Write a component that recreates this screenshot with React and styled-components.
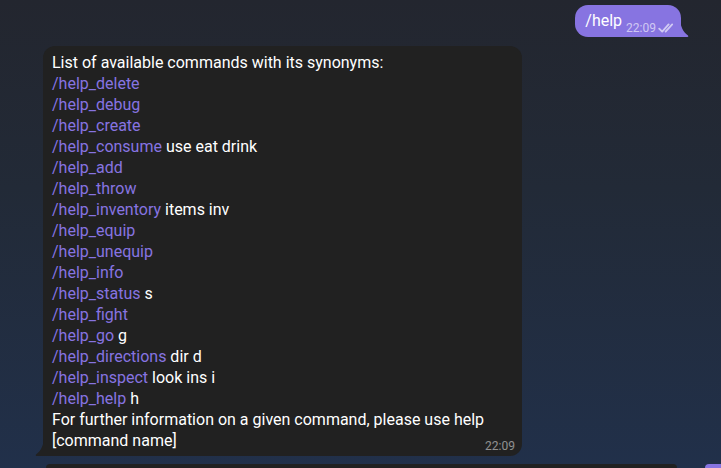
import React from "react";
import styled, { createGlobalStyle } from "styled-components";

const Global = createGlobalStyle`
  html, body {
    margin: 0;
    height: 468px;
    overflow: hidden;
  }
  body {
    background: linear-gradient(180deg, #23262f 0%, #222a37 40%, #21304a 100%);
    font-family: Roboto, "Liberation Sans", sans-serif;
    -webkit-font-smoothing: antialiased;
  }
`;

const Page = styled.div`
  display: flex;
  flex-direction: column;
  padding-top: 5px;
`;

const Row = styled.div`
  display: flex;
  justify-content: ${p => (p.$out ? "flex-end" : "flex-start")};
  padding: ${p => (p.$out ? "0 40px 0 0" : "0 0 0 43px")};
  margin-top: ${p => p.$gap || 0}px;
`;

const OutBubble = styled.div`
  position: relative;
  display: flex;
  align-items: flex-end;
  gap: 4px;
  background: #8774e1;
  color: #fff;
  border-radius: 13px 13px 0 13px;
  padding: 5px 6px 6px 10px;
  font-size: 16px;
  line-height: 21px;
`;

const InBubble = styled.div`
  position: relative;
  width: 479px;
  box-sizing: border-box;
  background: #212121;
  color: #fff;
  border-radius: 12px 12px 12px 0;
  padding: 6px 9px 5px 9px;
  font-size: 16px;
  line-height: 21px;
`;

const Tail = styled.svg`
  position: absolute;
  bottom: 0;
  width: 9px;
  height: 17px;
  ${p => (p.$out ? "right: -8px;" : "left: -8px;")}
`;

const Line = styled.div``;

const Cmd = styled.span`
  color: #8774e1;
`;

const OutMeta = styled.span`
  display: inline-flex;
  align-items: center;
  gap: 2px;
  font-size: 12px;
  line-height: 14px;
  color: rgba(255, 255, 255, 0.62);
  margin-bottom: -4px;
`;

const InMeta = styled.span`
  position: absolute;
  right: 7px;
  bottom: 3px;
  font-size: 12px;
  line-height: 14px;
  color: rgba(255, 255, 255, 0.5);
`;

const BottomRow = styled.div`
  display: flex;
  margin-top: 8px;
  padding-left: 46px;
  gap: 28px;
`;

const Stub = styled.div`
  height: 4px;
  width: ${p => p.$w}px;
  flex-shrink: 0;
  background: ${p => (p.$out ? "#8774e1" : "#212121")};
  border-radius: 4px 4px 0 0;
`;

const commands = [
  ["delete"],
  ["debug"],
  ["create"],
  ["consume", "use eat drink"],
  ["add"],
  ["throw"],
  ["inventory", "items inv"],
  ["equip"],
  ["unequip"],
  ["info"],
  ["status", "s"],
  ["fight"],
  ["go", "g"],
  ["directions", "dir d"],
  ["inspect", "look ins i"],
  ["help", "h"],
];

const Checks = () => (
  <svg width="17" height="10" viewBox="0 0 17 10" fill="none" stroke="currentColor" strokeWidth="1.8" strokeLinecap="round" strokeLinejoin="round">
    <path d="M1.2 5.6 L4.2 8.6 L10.6 1.4" />
    <path d="M7.6 8.6 L14.2 1.4" />
  </svg>
);

export default function App() {
  return (
    <>
      <Global />
      <Page>
        <Row $out>
          <OutBubble>
            <span>/help</span>
            <OutMeta>
              22:09
              <Checks />
            </OutMeta>
            <Tail $out viewBox="0 0 9 17">
              <path d="M0 0 C0.5 6 3 12 8 15.5 Q9 16.5 7.5 17 H0 Z" fill="#8774e1" />
            </Tail>
          </OutBubble>
        </Row>
        <Row $gap={9}>
          <InBubble>
            <Line>List of available commands with its synonyms:</Line>
            {commands.map(([name, syn]) => (
              <Line key={name}>
                <Cmd>/help_{name}</Cmd>
                {syn ? " " + syn : null}
              </Line>
            ))}
            <Line>For further information on a given command, please use help [command name]</Line>
            <InMeta>22:09</InMeta>
            <Tail viewBox="0 0 9 17">
              <path d="M9 0 C8.5 6 6 12 1 15.5 Q0 16.5 1.5 17 H9 Z" fill="#212121" />
            </Tail>
          </InBubble>
        </Row>
        <BottomRow>
          <Stub $w={631} />
          <Stub $out $w={40} />
        </BottomRow>
      </Page>
    </>
  );
}
